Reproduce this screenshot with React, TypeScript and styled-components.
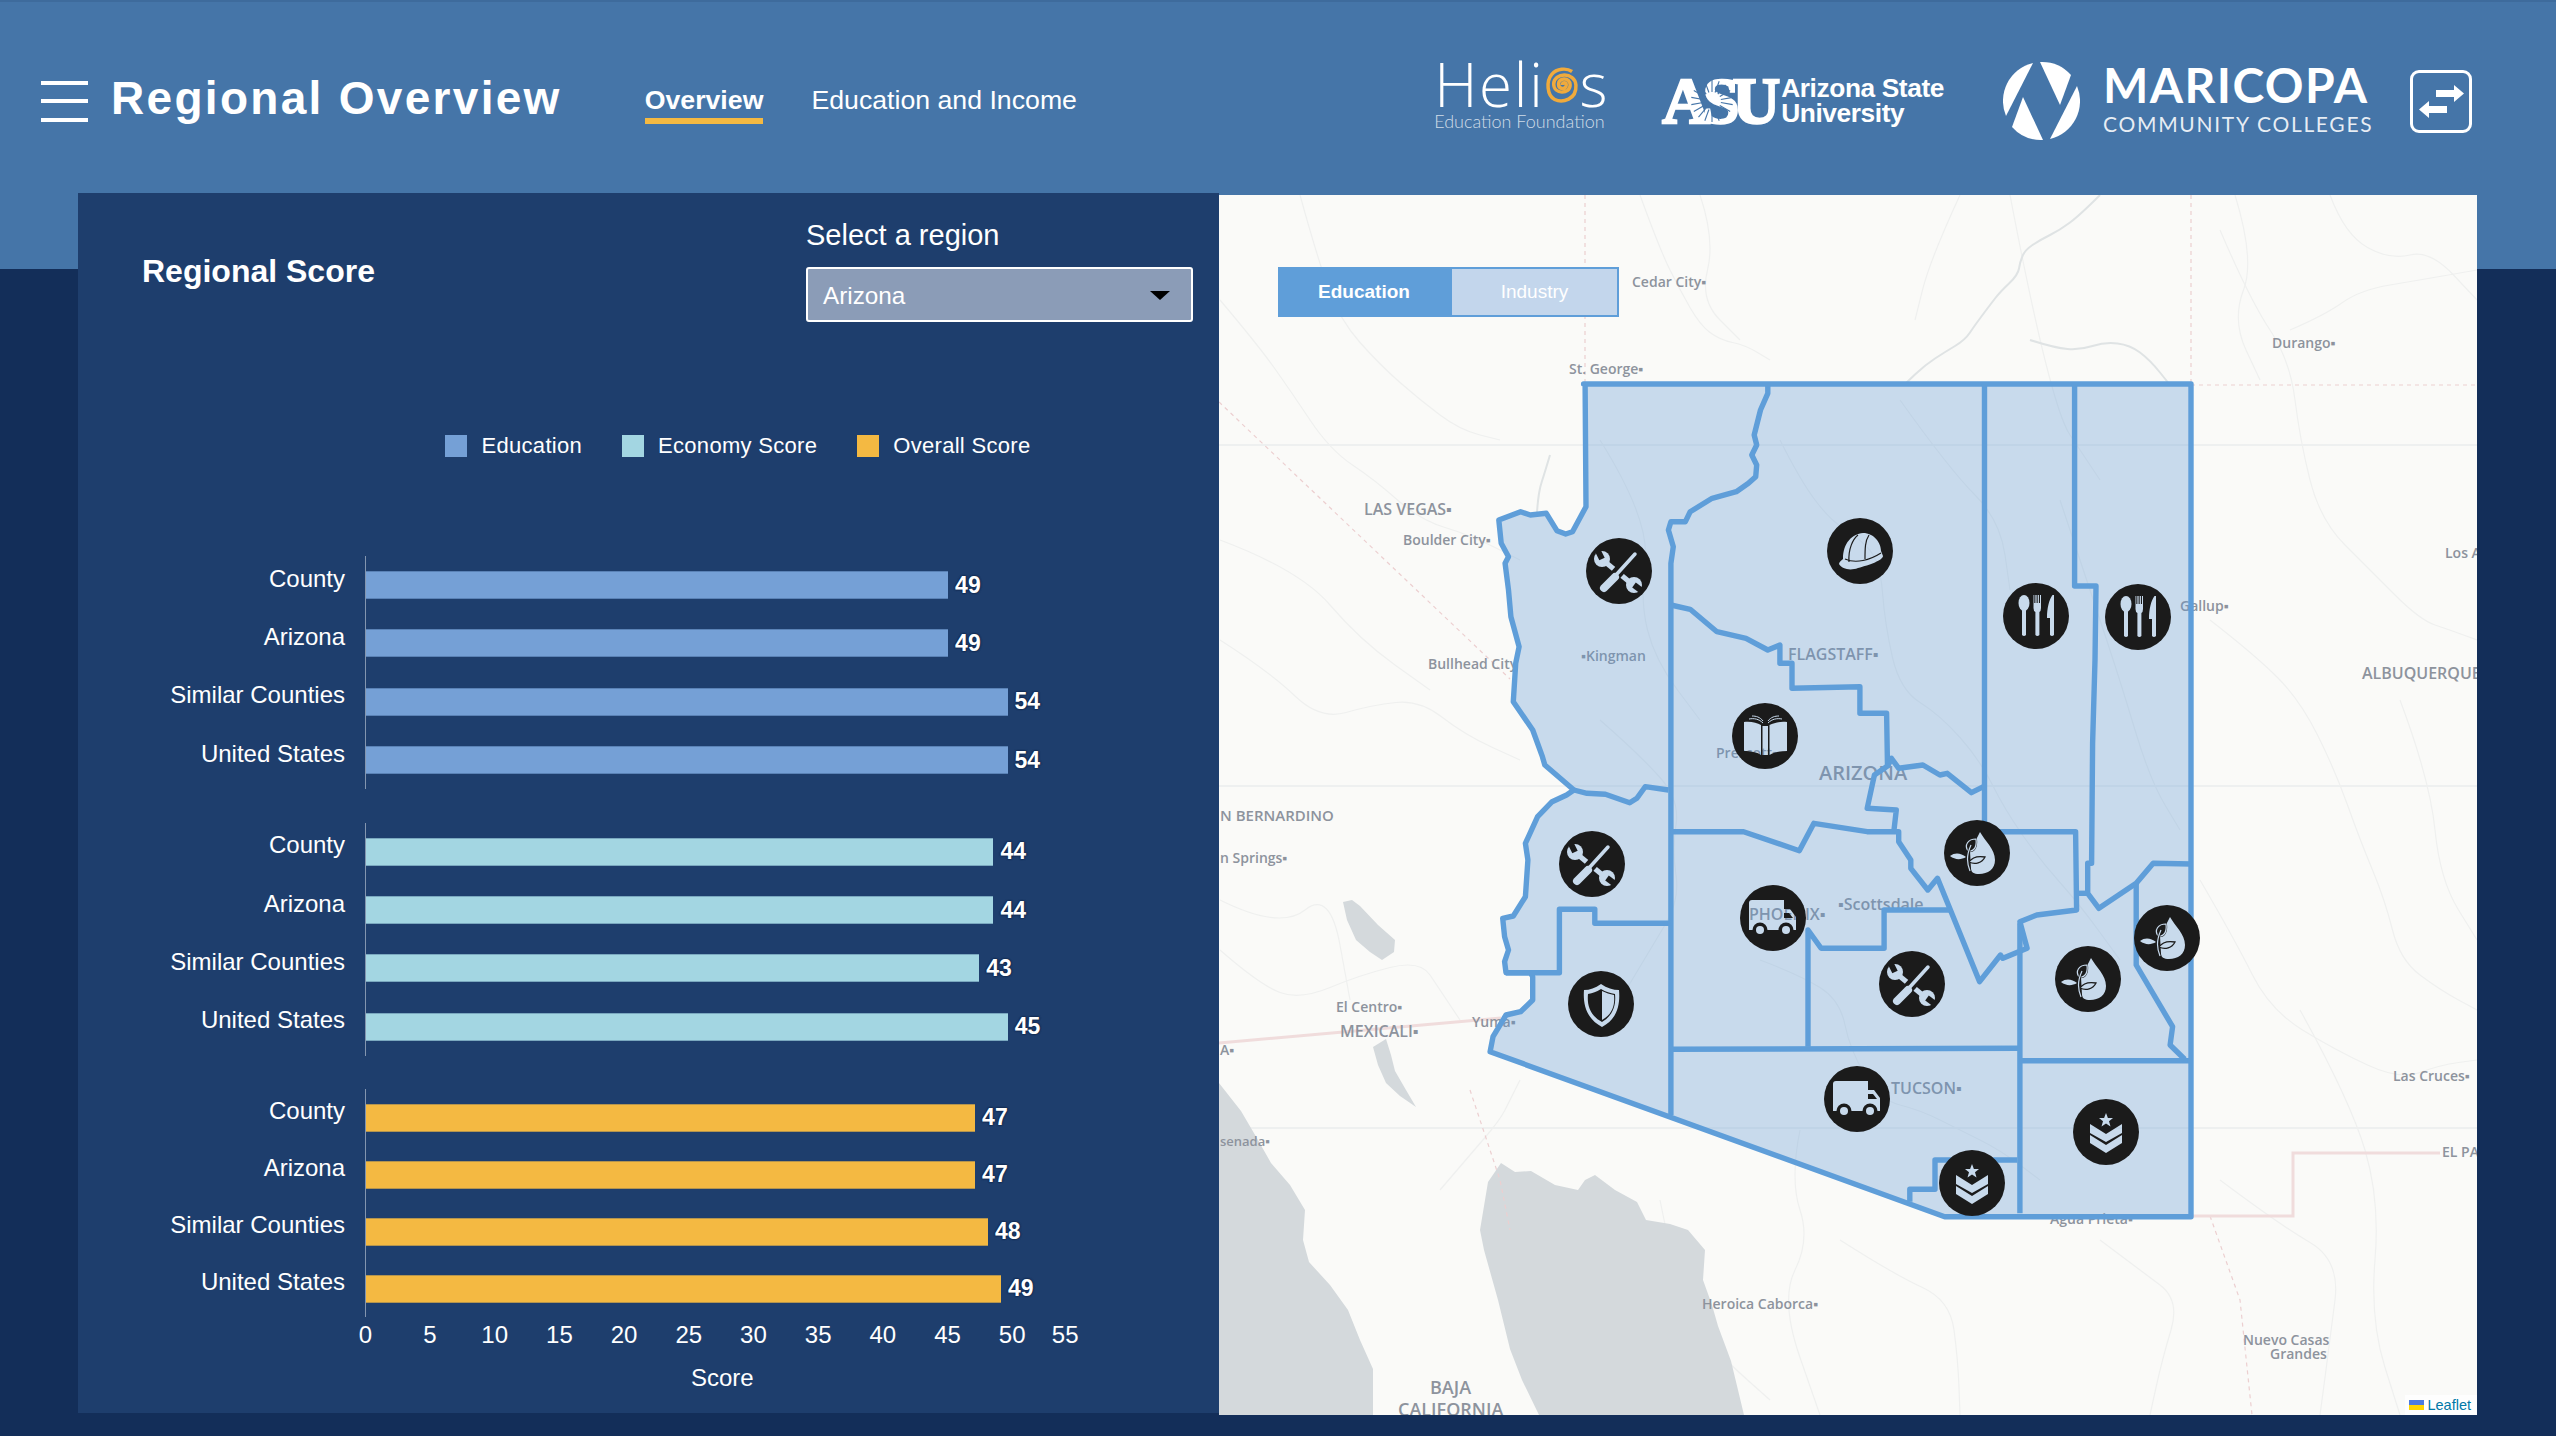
import React from "react";
import styled, { createGlobalStyle } from "styled-components";

const GlobalStyle = createGlobalStyle`
  html, body {
    margin: 0;
    padding: 0;
    background: #132e59;
    font-family: "Liberation Sans", Arial, sans-serif;
    color: #fff;
    overflow: hidden;
  }
  * { box-sizing: border-box; }
`;

type Row = { label: string; value: number };
type Group = { color: string; scale: number; rowHeight: number; rows: Row[] };

const rowsFor = (a: number, b: number, c: number, d: number): Row[] => [
  { label: "County", value: a },
  { label: "Arizona", value: b },
  { label: "Similar Counties", value: c },
  { label: "United States", value: d },
];

const groups: Group[] = [
  { color: "#75a0d6", scale: 11.88, rowHeight: 58.3, rows: rowsFor(49, 49, 54, 54) },
  { color: "#a3d6e2", scale: 14.26, rowHeight: 58.3, rows: rowsFor(44, 44, 43, 45) },
  { color: "#f4b942", scale: 12.96, rowHeight: 57, rows: rowsFor(47, 47, 48, 49) },
];

const legend = [
  { label: "Education", color: "#75a0d6" },
  { label: "Economy Score", color: "#a3d6e2" },
  { label: "Overall Score", color: "#f4b942" },
];

const ticks = [0, 5, 10, 15, 20, 25, 30, 35, 40, 45, 50];

// county outlines traced off two crops of the map, so x/y are in crop units
const UP = 360;
const LOW = 780;
const trace = (top: number, pts: number[]) => {
  const out: string[] = [];
  for (let i = 0; i < pts.length; i += 2) {
    out.push(`${(1460 + pts[i] / 2.063).toFixed(1)},${(top + pts[i + 1] / 3).toFixed(1)}`);
  }
  return out.join(" ");
};

// rounds a rough polyline off so roads and rivers don't look ruled
const smooth = (points: string) => {
  const pts = points.split(" ").map((p) => p.split(",").map(Number));
  let d = `M${pts[0][0]},${pts[0][1]}`;
  for (let i = 1; i < pts.length - 1; i++) {
    const mx = (pts[i][0] + pts[i + 1][0]) / 2;
    const my = (pts[i][1] + pts[i + 1][1]) / 2;
    d += ` Q${pts[i][0]},${pts[i][1]} ${mx},${my}`;
  }
  const last = pts[pts.length - 1];
  return `${d} L${last[0]},${last[1]}`;
};

const stateOutline = [
  trace(UP, [255, 72, 1508, 72]),
  trace(LOW, [1508, 1310, 1000, 1310, 62, 815, 68, 770, 95, 705, 125, 695, 150, 660, 150, 590, 145, 578, 95, 578, 92, 545, 100, 510, 92, 470, 88, 415, 110, 408, 135, 350, 140, 240, 135, 190, 160, 110, 190, 65, 220, 45, 235, 30]),
  trace(UP, [235, 1290, 175, 1215, 170, 1190, 150, 1110, 110, 1025, 115, 910, 122, 860, 105, 770, 100, 690, 93, 610, 100, 590, 85, 550, 80, 480, 125, 455, 145, 465, 178, 460, 200, 512, 218, 522, 232, 515, 260, 440, 258, 72]),
].join(" ");

const countyLines = [
  trace(UP, [635, 72, 635, 100, 620, 150, 607, 225, 612, 255, 602, 285, 612, 315, 610, 350, 595, 370, 570, 395, 520, 415, 475, 455, 465, 485, 435, 485, 430, 510, 440, 560, 435, 610, 435, 2265]),
  trace(UP, [235, 1290, 262, 1300, 300, 1303, 350, 1328, 365, 1315, 382, 1280, 430, 1290]),
  trace(UP, [435, 735, 475, 748, 530, 815, 590, 835, 635, 870, 660, 855, 660, 910, 685, 910, 685, 985, 825, 980, 825, 1060, 880, 1060, 882, 1220]),
  trace(UP, [882, 1220, 890, 1195, 905, 1225, 955, 1215, 990, 1245, 1005, 1240, 1055, 1298, 1080, 1280]),
  trace(UP, [885, 1215, 855, 1245, 840, 1345, 900, 1350, 895, 1415]),
  trace(UP, [1082, 72, 1082, 1415]),
  trace(UP, [1268, 72, 1268, 678, 1312, 678, 1310, 900, 1305, 1150, 1303, 1510, 1295, 1510, 1295, 1600, 1318, 1645, 1395, 1570, 1430, 1510, 1508, 1512]),
  trace(LOW, [435, 155, 585, 155, 700, 212, 730, 130, 840, 155, 905, 155, 905, 185, 930, 240, 930, 265, 965, 330, 985, 295, 1072, 605, 1115, 525, 1120, 535, 1170, 505, 1155, 425, 1190, 405, 1272, 390, 1270, 155, 1082, 155]),
  trace(LOW, [1272, 340, 1295, 340]),
  trace(LOW, [718, 800, 718, 450, 745, 505, 875, 505, 875, 390, 1010, 390]),
  trace(LOW, [435, 808, 1155, 805]),
  trace(LOW, [1155, 430, 1155, 1300]),
  trace(LOW, [1155, 842, 1505, 842]),
  trace(LOW, [1395, 310, 1395, 555, 1470, 740, 1465, 795, 1495, 838]),
  trace(LOW, [95, 578, 205, 578, 205, 388, 278, 388, 278, 430, 435, 430]),
  trace(LOW, [1150, 1140, 980, 1140, 980, 1228, 928, 1228, 928, 1265]),
];

const waters = [
  "1219,1083 1241,1111 1258,1140 1271,1163 1290,1185 1305,1210 1303,1240 1309,1262 1330,1285 1348,1310 1360,1340 1373,1369 1373,1415 1219,1415",
  "1501,1163 1515,1172 1531,1171 1555,1185 1578,1190 1585,1180 1595,1175 1615,1190 1637,1202 1646,1220 1670,1224 1688,1230 1705,1250 1703,1280 1712,1305 1718,1326 1731,1361 1738,1390 1744,1415 1539,1415 1522,1380 1510,1349 1498,1300 1484,1250 1480,1230 1488,1182",
  "1343,902 1352,900 1360,906 1378,925 1395,940 1394,952 1382,960 1370,952 1356,940 1347,920",
  "1373,1047 1386,1039 1391,1055 1395,1071 1406,1090 1416,1107 1400,1096 1386,1083 1378,1065",
];

const graticule = ["1219,445 2477,445", "1219,786 2477,786", "1219,1128 2477,1128"];

const faintLines = [
  "1220,300 1258,345 1290,390 1330,450 1375,480 1420,520 1470,535 1520,560",
  "1220,640 1270,672 1320,720 1372,705 1420,700 1465,735 1520,760",
  "1300,195 1318,260 1340,320 1380,365 1420,400 1460,430 1500,440",
  "1640,195 1660,250 1680,290 1700,325 1720,340 1745,345 1770,360",
  "1780,440 1800,480 1830,520 1855,535 1880,560 1885,625 1900,690 1940,715 1980,760 2005,810 2040,860 2080,905 2120,960",
  "1600,720 1640,755 1680,800 1672,850 1680,900 1650,950 1620,1000",
  "1760,960 1800,975 1840,1000 1850,1050 1880,1100 1920,1110 1960,1130 2000,1150 2040,1180",
  "2220,230 2250,300 2290,360 2300,440 2320,520 2370,570 2420,620 2450,630 2477,640",
  "2210,620 2255,655 2300,700 2335,770 2360,840 2385,900 2400,960 2440,990 2477,1010",
  "2200,880 2235,940 2270,1010 2335,1050 2400,1080 2440,1065 2477,1060",
  "1660,1200 1672,1260 1690,1320 1725,1360 1770,1400",
  "1840,1240 1895,1275 1950,1300 1958,1360 1960,1415",
  "2100,1240 2140,1270 2180,1300 2162,1360 2150,1415",
  "2220,1180 2280,1225 2340,1260 2330,1340 2320,1415",
  "1220,950 1260,985 1300,1000 1360,975 1420,960 1440,990 1460,1020",
  "1440,1190 1470,1155 1500,1120 1510,1100 1520,1080",
  "2290,330 2325,315 2360,290 2420,280 2477,270",
  "2010,195 2030,300 2060,420 2080,450 2100,480",
  "1700,195 1715,240 1700,300 1740,340",
  "1960,195 1930,260 1915,320",
  "2235,195 2255,260 2232,320 2260,380",
  "2330,195 2345,235 2390,260 2430,250 2477,300",
  "1600,440 1650,520 1640,600 1655,660 1700,720",
  "1900,400 1950,470 2000,520 2010,590",
  "2060,500 2090,590 2120,680 2150,780 2180,830",
  "1220,540 1300,570 1360,640 1430,690",
  "1220,900 1280,930 1330,890 1350,1000",
  "1800,1130 1790,1180 1810,1240 1780,1300 1820,1415",
  "2400,700 2430,780 2440,880 2477,940",
  "2300,1010 2350,1100 2380,1200 2370,1320 2400,1415",
];

const rivers = [
  "2100,195 2080,215 2060,230 2040,240 2025,250 2020,262 2018,275 2000,292 1990,305 1975,325 1965,340 1945,352 1925,365 1905,384",
  "1550,455 1544,475 1540,487 1538,500 1537,512",
  "2030,340 2055,348 2080,350 2105,342 2130,345 2150,360 2170,385",
];

const mapLabels = [
  { x: 1632, y: 287, size: 14, text: "Cedar City▪" },
  { x: 1569, y: 374, size: 14, text: "St. George▪" },
  { x: 2272, y: 348, size: 14, text: "Durango▪" },
  { x: 1364, y: 515, size: 16, text: "LAS VEGAS▪" },
  { x: 1403, y: 545, size: 14, text: "Boulder City▪" },
  { x: 1428, y: 669, size: 14, text: "Bullhead City" },
  { x: 1581, y: 661, size: 14, text: "▪Kingman" },
  { x: 1788, y: 660, size: 16, text: "FLAGSTAFF▪" },
  { x: 2180, y: 611, size: 14, text: "Gallup▪" },
  { x: 2445, y: 558, size: 14, text: "Los A" },
  { x: 2362, y: 679, size: 16, text: "ALBUQUERQUE" },
  { x: 1819, y: 780, size: 20, text: "ARIZONA" },
  { x: 1716, y: 758, size: 14, text: "Prescott▪" },
  { x: 1220, y: 821, size: 15, text: "N BERNARDINO" },
  { x: 1220, y: 863, size: 14, text: "n Springs▪" },
  { x: 1749, y: 920, size: 16, text: "PHOENIX▪" },
  { x: 1838, y: 910, size: 16, text: "▪Scottsdale" },
  { x: 1336, y: 1012, size: 14, text: "El Centro▪" },
  { x: 1340, y: 1037, size: 16, text: "MEXICALI▪" },
  { x: 1472, y: 1027, size: 14, text: "Yuma▪" },
  { x: 1220, y: 1055, size: 14, text: "A▪" },
  { x: 2393, y: 1081, size: 14, text: "Las Cruces▪" },
  { x: 1891, y: 1094, size: 16, text: "TUCSON▪" },
  { x: 1220, y: 1146, size: 13, text: "senada▪" },
  { x: 2442, y: 1157, size: 14, text: "EL PA" },
  { x: 2050, y: 1224, size: 14, text: "Agua Prieta▪" },
  { x: 1702, y: 1309, size: 14, text: "Heroica Caborca▪" },
  { x: 2243, y: 1345, size: 14, text: "Nuevo Casas" },
  { x: 2270, y: 1359, size: 14, text: "Grandes" },
  { x: 1430, y: 1394, size: 18, text: "BAJA" },
  { x: 1398, y: 1416, size: 18, text: "CALIFORNIA" },
];

const HOLE = "#000";
const SOLID = "#fff";

const glyphs: Record<string, React.ReactNode> = {
  tools: (
    <>
      <g fill={HOLE}>
        <path d="M-15,-10 L13,13" stroke={HOLE} strokeWidth={5} />
        <circle cx={-17} cy={-12} r={8} />
        <circle cx={15} cy={14} r={8} />
      </g>
      <path d="M-17,-12 L-22,-22" stroke={SOLID} strokeWidth={6} />
      <path d="M15,14 L23,20" stroke={SOLID} strokeWidth={6} />
      <path d="M17,-19 L-16,18" stroke={SOLID} strokeWidth={11} />
      <path d="M16,-17 L-3,4" stroke={HOLE} strokeWidth={3.5} strokeLinecap="round" />
      <path d="M-4,6 L-15,17" stroke={HOLE} strokeWidth={8} strokeLinecap="round" />
    </>
  ),
  hat: (
    <>
      <path d="M-17,8 C-17,-8 -8,-17 3,-18 C14,-18 21,-8 21,0 L23,5 C23,9 10,14 -2,17 C-10,20 -18,18 -21,13 C-21,11 -19,10 -17,8Z" fill={HOLE} />
      <g fill="none" stroke={SOLID} strokeWidth={1.2}>
        <path d="M-11,11 C-12,-2 -7,-12 -2,-16" />
        <path d="M5,8 C5,-2 5,-10 9,-16" />
        <path d="M-15,8 C-4,13 10,9 21,2" />
      </g>
    </>
  ),
  dining: (
    <g fill={HOLE}>
      <ellipse cx={-12} cy={-13} rx={5.5} ry={8} />
      <path d="M-14,-6 L-10,-6 L-10,19 Q-12,21 -14,19Z" />
      <path d="M-2.5,-21 L-1.7,-21 L-1.7,-13 L-0.6,-13 L-0.6,-21 L0.6,-21 L0.6,-13 L1.7,-13 L1.7,-21 L2.9,-21 L2.9,-13 L4,-13 L4,-21 L5,-21 L5,-8 Q5,-5 3.4,-4 L3.4,19 Q1.3,21 -0.6,19 L-0.6,-4 Q-2.5,-5 -2.5,-8Z" />
      <path d="M16.5,-21 L18,-21 L18,19 Q16,21 14,19 L14,2 L11,2 C11,-8 13,-16 16.5,-21Z" />
    </g>
  ),
  book: (
    <>
      <g fill={HOLE}>
        <path d="M-21,-14 C-14,-15 -8,-13 -4,-11 L-4,19 C-8,16 -15,15 -21,15Z" />
        <rect x={-2.5} y={-10} width={5.5} height={29} />
        <path d="M4.5,-11 C9,-13 15,-15 22,-14 L22,15 C15,15 9,16 4.5,19Z" />
      </g>
      <g fill="none" stroke={HOLE} strokeWidth={1}>
        <path d="M-2,-13 C-6,-17 -11,-18 -16,-17" />
        <path d="M-2,-15 C-5,-19 -9,-20 -13,-20" />
        <path d="M3,-13 C7,-17 12,-18 17,-17" />
        <path d="M3,-15 C6,-19 10,-20 14,-20" />
      </g>
    </>
  ),
  truck: (
    <>
      <path d="M-24,-15 Q-24,-18 -21,-18 L11,-18 L11,-9 L17,-9 L23,-1 L23,12 L-24,12Z" fill={HOLE} />
      <path d="M11,-5 L16,-5 L20,0 L11,0Z" fill={SOLID} />
      <circle cx={-13} cy={12} r={7.5} fill={SOLID} />
      <circle cx={13} cy={12} r={7.5} fill={SOLID} />
      <circle cx={-13} cy={12} r={4} fill={HOLE} />
      <circle cx={13} cy={12} r={4} fill={HOLE} />
    </>
  ),
  plant: (
    <>
      <path d="M3,-21 C8,-12 18,-4 18,7 C18,16 11,21 2,21 C-3,21 -6,19 -6,16 L-7,-2 C-4,-8 0,-15 3,-21Z" fill={HOLE} />
      <path d="M-9,-2 C-13,-8 -9,-14 -1,-14 C0,-6 -3,-1 -9,-2Z" fill={SOLID} stroke={SOLID} strokeWidth={2} />
      <path d="M-9,-2 C-13,-8 -9,-14 -1,-14 C0,-6 -3,-1 -9,-2Z" fill="none" stroke={HOLE} strokeWidth={1.2} />
      <path d="M-8,9 C-4,3 2,3 8,4 C5,10 -2,12 -8,9Z" fill={HOLE} stroke={SOLID} strokeWidth={1.3} />
      <path d="M-27,3 C-22,-1 -16,0 -11,4 C-16,7 -22,7 -27,3Z" fill={HOLE} />
      <path d="M-6,-8 C-11,3 -10,10 -7,18" fill="none" stroke={SOLID} strokeWidth={3} />
      <path d="M-6,-8 C-11,3 -10,10 -7,18" fill="none" stroke={HOLE} strokeWidth={1.2} />
    </>
  ),
  shield: (
    <>
      <path d="M0,-20 C6,-16 12,-14 18,-14 C19,-2 18,14 1,23 C-16,14 -18,-2 -17,-14 C-11,-14 -6,-16 0,-20Z" fill={HOLE} />
      <path d="M0,-15 C5,-12 9,-11 14,-10 C15,0 13,11 1,18 C-12,11 -14,0 -13,-10 C-8,-11 -5,-12 0,-15Z" fill={SOLID} />
      <path d="M1,-13 C5,-11 9,-10 13,-9 C14,0 12,10 1,16Z" fill={HOLE} />
    </>
  ),
  rank: (
    <g fill={HOLE}>
      <path d="M0,-19 L1.9,-14 L7,-14 L3,-10.7 L4.5,-5.5 L0,-8.6 L-4.5,-5.5 L-3,-10.7 L-7,-14 L-1.9,-14Z" />
      <path d="M-16,-8 L0,2 L16,-8 L16,1 L0,10 L-16,1Z" />
      <path d="M-16,3 L0,13 L16,3 L16,11 L0,21 L-16,11Z" />
    </g>
  ),
};

const markers = [
  { x: 1619, y: 571, kind: "tools" },
  { x: 1860, y: 551, kind: "hat" },
  { x: 2036, y: 616, kind: "dining" },
  { x: 2138, y: 617, kind: "dining" },
  { x: 1765, y: 736, kind: "book" },
  { x: 1592, y: 864, kind: "tools" },
  { x: 1773, y: 918, kind: "truck" },
  { x: 1977, y: 853, kind: "plant" },
  { x: 2167, y: 938, kind: "plant" },
  { x: 2088, y: 979, kind: "plant" },
  { x: 1601, y: 1004, kind: "shield" },
  { x: 1912, y: 984, kind: "tools" },
  { x: 1857, y: 1099, kind: "truck" },
  { x: 2106, y: 1132, kind: "rank" },
  { x: 1972, y: 1183, kind: "rank" },
];

const App = () => (
  <>
    <GlobalStyle />
    <Header>
      <Hamburger>
        <span />
        <span />
        <span />
      </Hamburger>
      <Title>Regional Overview</Title>
      <Nav>
        <NavLink $active>Overview</NavLink>
        <NavLink>Education and Income</NavLink>
      </Nav>
      <Logos>
        <HeliosLogo>
          <HeliosWord>
            Hel<span>i</span>
            <svg width="36" height="40" viewBox="0 0 36 40" fill="none" stroke="#f0aa3c" strokeWidth="3.6">
              <path d="M18,20 C18,17 22,17 22,20 C22,25 14,25 14,19 C14,12 26,12 26,20 C26,30 9,30 9,19 C9,7 31,6 32,20 C33,35 18,39 10,35 C2,31 1,16 7,9 C12,3 22,2 28,6" />
            </svg>
            s
          </HeliosWord>
          <HeliosTag>Education Foundation</HeliosTag>
        </HeliosLogo>
        <AsuLogo>
          <AsuMark>
            ASU
            <AsuRays width="44" height="44" viewBox="-22 -22 44 44" stroke="#4575a8" strokeWidth="1.1">
              {Array.from({ length: 18 }, (_, i) => (
                <line key={i} x1="0" y1="-9" x2="0" y2="-21" transform={`rotate(${i * 20})`} />
              ))}
            </AsuRays>
          </AsuMark>
          <AsuName>
            Arizona State
            <br />
            University
          </AsuName>
        </AsuLogo>
        <MaricopaLogo>
          <svg width="77" height="80" viewBox="0 0 77 80" fill="#fff">
            <path d="M30,2 A39,39 0 0 0 3,55 Z" />
            <path d="M37,1 A39,39 0 0 1 68,14 L57,44 Z" />
            <path d="M40,79 A39,39 0 0 1 9,66 L20,36 Z" />
            <path d="M47,78 A39,39 0 0 0 74,25 Z" />
          </svg>
          <MaricopaText>
            <MaricopaName>MARICOPA</MaricopaName>
            <MaricopaSub>COMMUNITY COLLEGES</MaricopaSub>
          </MaricopaText>
        </MaricopaLogo>
        <SwapButton>
          <svg width="56" height="57" viewBox="3 3 56 57" fill="#fff">
            <path d="M26,20 H44 V15 L54,23.5 L44,32 V27 H26Z" />
            <path d="M37,36 H19 V31 L9,39.5 L19,48 V43 H37Z" />
          </svg>
        </SwapButton>
      </Logos>
    </Header>
    <Main>
      <ScorePanel>
        <PanelHead>
          <PanelTitle>Regional Score</PanelTitle>
          <RegionPicker>
            <PickerLabel>Select a region</PickerLabel>
            <Picker>
              Arizona
              <Caret />
            </Picker>
          </RegionPicker>
        </PanelHead>
        <Legend>
          {legend.map((item) => (
            <LegendItem key={item.label}>
              <LegendSwatch $color={item.color} />
              {item.label}
            </LegendItem>
          ))}
        </Legend>
        <Chart>
          {groups.map((group) => (
            <div key={group.color}>
              {group.rows.map((row) => (
                <ChartRow key={row.label} $height={group.rowHeight}>
                  <RowLabel>{row.label}</RowLabel>
                  <Track>
                    <Bar $color={group.color} style={{ width: row.value * group.scale }} />
                    <BarValue>{row.value}</BarValue>
                  </Track>
                </ChartRow>
              ))}
            </div>
          ))}
        </Chart>
        <Ticks>
          {ticks.map((tick) => (
            <Tick key={tick}>{tick}</Tick>
          ))}
          <Tick $narrow>55</Tick>
        </Ticks>
        <AxisTitle>Score</AxisTitle>
      </ScorePanel>
      <MapPanel>
        <svg width="1258" height="1220" viewBox="1219 195 1258 1220">
          <defs>
            {Object.keys(glyphs).map((kind) => (
              <mask key={kind} id={`marker-${kind}`} maskUnits="userSpaceOnUse" x="-34" y="-34" width="68" height="68">
                <rect x="-34" y="-34" width="68" height="68" fill={SOLID} />
                {glyphs[kind]}
              </mask>
            ))}
          </defs>
          {graticule.map((points) => (
            <polyline key={points} points={points} fill="none" stroke="#eaecee" strokeWidth="1.5" />
          ))}
          {faintLines.map((points) => (
            <path key={points} d={smooth(points)} fill="none" stroke="#eff0ef" strokeWidth="1.2" />
          ))}
          {waters.map((points) => (
            <polygon key={points} points={points} fill="#d4d9dc" />
          ))}
          {rivers.map((points) => (
            <path key={points} d={smooth(points)} fill="none" stroke="#dfe3e4" strokeWidth="2" />
          ))}
          <g fill="none" stroke="#eccfd0" strokeWidth="1.2" strokeDasharray="4 4">
            <path d="M1585,195 V384" />
            <path d="M2191,195 V384" />
            <path d="M2191,385 H2477" />
            <path d="M1219,402 L1510,679" />
            <path d="M1470,1090 L1500,1180 L1510,1230" />
            <path d="M2210,1216 L2240,1300 L2252,1415" />
          </g>
          <g fill="none" stroke="#f0dcdc" strokeWidth="3">
            <path d="M2191,1216 H2293 V1153 H2440" />
            <path d="M1219,1043 L1501,1018" />
          </g>
          {mapLabels.map((label) => (
            <MapLabel key={label.text} x={label.x} y={label.y} $size={label.size}>
              {label.text}
            </MapLabel>
          ))}
          <polygon points={stateOutline} fill="#5f98d4" fillOpacity="0.32" stroke="none" />
          <g fill="none" stroke="#5f9ed9" strokeWidth="5.4" strokeLinejoin="round">
            <polygon points={stateOutline} />
            {countyLines.map((points) => (
              <polyline key={points} points={points} />
            ))}
          </g>
          {markers.map((marker) => (
            <g key={`${marker.x}-${marker.y}`} transform={`translate(${marker.x} ${marker.y})`}>
              <circle r="33" fill="#1b1b1b" mask={`url(#marker-${marker.kind})`} />
            </g>
          ))}
        </svg>
        <Toggle>
          <ToggleButton $active>Education</ToggleButton>
          <ToggleButton>Industry</ToggleButton>
        </Toggle>
        <Attribution>
          <svg width="15" height="10" viewBox="0 0 15 10">
            <rect width="15" height="5" fill="#4c7be0" />
            <rect y="5" width="15" height="5" fill="#ffd500" />
          </svg>
          Leaflet
        </Attribution>
      </MapPanel>
    </Main>
  </>
);

export default App;

const Header = styled.header`
  height: 269px;
  display: flex;
  align-items: center;
  padding: 0 84px 69px 41px;
  background: #4575a8;
  border-top: 2px solid #3e6b9c;
`;

const Hamburger = styled.div`
  width: 47px;
  height: 41px;
  display: flex;
  flex-direction: column;
  justify-content: space-between;
  span {
    display: block;
    height: 4px;
    background: #fff;
  }
`;

const Title = styled.h1`
  margin: -6px 0 0 23px;
  font-size: 46px;
  font-weight: 700;
  letter-spacing: 2.3px;
  white-space: nowrap;
`;

const Nav = styled.nav`
  display: flex;
  gap: 48px;
  margin-left: 83px;
`;

const NavLink = styled.a<{ $active?: boolean }>`
  font-size: 26.7px;
  line-height: 32px;
  padding: 6px 0 2px;
  font-weight: ${(p) => (p.$active ? 700 : 400)};
  border-bottom: 6px solid ${(p) => (p.$active ? "#f4b942" : "transparent")};
  white-space: nowrap;
`;

const Logos = styled.div`
  display: flex;
  align-items: center;
  margin-left: auto;
`;

const HeliosLogo = styled.div`
  width: 175px;
  display: flex;
  flex-direction: column;
  margin-bottom: 11px;
`;

const HeliosWord = styled.div`
  display: flex;
  align-items: center;
  height: 46px;
  font-family: "Open Sans", sans-serif;
  font-weight: 300;
  font-size: 60px;
  letter-spacing: 1.8px;
  svg {
    margin: 2px 0 0 0;
  }
`;

const HeliosTag = styled.div`
  margin-top: 4px;
  font-family: Lato, sans-serif;
  font-weight: 300;
  font-size: 18px;
  line-height: 20px;
  color: rgba(255, 255, 255, 0.75);
  white-space: nowrap;
`;

const AsuLogo = styled.div`
  display: flex;
  align-items: center;
  margin-left: 53px;
  gap: 10px;
`;

const AsuMark = styled.div`
  position: relative;
  width: 109px;
  font-family: "Liberation Serif", serif;
  font-weight: 700;
  font-size: 66px;
  line-height: 46px;
  letter-spacing: -7px;
  -webkit-text-stroke: 2.5px #fff;
`;

const AsuRays = styled.svg`
  position: absolute;
  left: 28px;
  top: 1px;
`;

const AsuName = styled.div`
  font-size: 26.3px;
  font-weight: 700;
  line-height: 25px;
  letter-spacing: -0.4px;
  white-space: nowrap;
`;

const MaricopaLogo = styled.div`
  display: flex;
  align-items: center;
  gap: 23px;
  margin-left: 59px;
`;

const MaricopaText = styled.div`
  width: 267px;
  display: flex;
  flex-direction: column;
  gap: 7px;
  margin-bottom: 3px;
  font-family: Lato, sans-serif;
`;

const MaricopaName = styled.div`
  font-size: 48px;
  line-height: 42px;
  font-weight: 700;
  letter-spacing: 1.4px;
  white-space: nowrap;
`;

const MaricopaSub = styled.div`
  font-size: 21px;
  line-height: 22px;
  letter-spacing: 1.7px;
  color: rgba(255, 255, 255, 0.88);
  white-space: nowrap;
`;

const SwapButton = styled.div`
  width: 62px;
  height: 63px;
  margin-left: 40px;
  display: flex;
  align-items: center;
  justify-content: center;
  border: 3px solid #fff;
  border-radius: 9px;
`;

const Main = styled.main`
  display: flex;
  align-items: flex-start;
  margin-top: -76px;
  padding-left: 78px;
`;

const ScorePanel = styled.section`
  width: 1141px;
  height: 1220px;
  background: #1e3e6d;
`;

const PanelHead = styled.div`
  height: 129px;
  display: flex;
  justify-content: space-between;
  padding: 0 26px 0 64px;
`;

const PanelTitle = styled.h2`
  margin: 60px 0 0;
  font-size: 32px;
  line-height: 37px;
  font-weight: 700;
  white-space: nowrap;
`;

const RegionPicker = styled.div`
  width: 387px;
  display: flex;
  flex-direction: column;
  justify-content: flex-end;
`;

const PickerLabel = styled.div`
  font-size: 29px;
  line-height: 34px;
  margin-bottom: 15px;
`;

const Picker = styled.div`
  height: 55px;
  display: flex;
  align-items: center;
  justify-content: space-between;
  padding: 2px 21px 0 15px;
  background: #8b9cb7;
  border: 2px solid #fff;
  border-radius: 3px;
  font-size: 24.3px;
`;

const Caret = styled.span`
  width: 0;
  height: 0;
  border-left: 10px solid transparent;
  border-right: 10px solid transparent;
  border-top: 9px solid #000;
`;

const Legend = styled.div`
  display: flex;
  gap: 39.5px;
  margin-top: 113px;
  padding-left: 367px;
`;

const LegendItem = styled.div`
  display: flex;
  align-items: center;
  gap: 14.5px;
  height: 22px;
  font-size: 22px;
  letter-spacing: 0.3px;
  white-space: nowrap;
`;

const LegendSwatch = styled.span<{ $color: string }>`
  width: 22px;
  height: 22px;
  background: ${(p) => p.$color};
`;

const Chart = styled.div`
  display: flex;
  flex-direction: column;
  gap: 33.5px;
  margin-top: 99px;
`;

const ChartRow = styled.div<{ $height: number }>`
  height: ${(p) => p.$height}px;
  display: flex;
  align-items: center;
`;

const RowLabel = styled.div`
  width: 267px;
  margin-right: 20px;
  margin-bottom: 13px;
  font-size: 24px;
  text-align: right;
  white-space: nowrap;
`;

const Track = styled.div`
  flex: 1;
  height: 100%;
  display: flex;
  align-items: center;
  border-left: 1px solid rgba(255, 255, 255, 0.45);
`;

const Bar = styled.div<{ $color: string }>`
  height: 28px;
  background: ${(p) => p.$color};
  border-top: 1px solid rgba(30, 62, 109, 0.3);
  border-bottom: 1px solid rgba(30, 62, 109, 0.3);
`;

const BarValue = styled.span`
  margin-left: 7px;
  font-size: 23px;
  font-weight: 700;
  text-shadow: 0 0 2px #0e2244, 0 0 2px #0e2244, 0 0 1px #0e2244;
`;

const Ticks = styled.div`
  display: flex;
  margin: 4px 0 0 255px;
`;

const Tick = styled.div<{ $narrow?: boolean }>`
  width: ${(p) => (p.$narrow ? 41.3 : 64.7)}px;
  flex: none;
  font-size: 24px;
  line-height: 28px;
  text-align: center;
`;

const AxisTitle = styled.div`
  margin: 15px 0 0;
  padding-left: 613px;
  font-size: 24px;
  line-height: 28px;
`;

const MapPanel = styled.section`
  position: relative;
  width: 1258px;
  height: 1220px;
  margin-top: 2px;
  background: #fafaf8;
  overflow: hidden;
  svg {
    display: block;
  }
`;

const MapLabel = styled.text<{ $size: number }>`
  font-family: "Open Sans", sans-serif;
  font-size: ${(p) => p.$size}px;
  font-weight: 600;
  fill: #8d939d;
`;

const Toggle = styled.div`
  position: absolute;
  left: 59px;
  top: 72px;
  display: flex;
  height: 50px;
  width: 341px;
`;

const ToggleButton = styled.div<{ $active?: boolean }>`
  flex: ${(p) => (p.$active ? "0 0 172px" : 1)};
  display: flex;
  align-items: center;
  justify-content: center;
  font-size: 19px;
  font-weight: ${(p) => (p.$active ? 700 : 400)};
  color: #fff;
  background: ${(p) => (p.$active ? "#5f9ed9" : "#c3d6ec")};
  border: 2px solid #5f9ed9;
`;

const Attribution = styled.div`
  position: absolute;
  right: 0;
  bottom: 0;
  display: flex;
  align-items: center;
  gap: 3px;
  height: 20px;
  padding: 0 6px 0 4px;
  background: rgba(255, 255, 255, 0.8);
  color: #0078a8;
  font-size: 14.5px;
`;
